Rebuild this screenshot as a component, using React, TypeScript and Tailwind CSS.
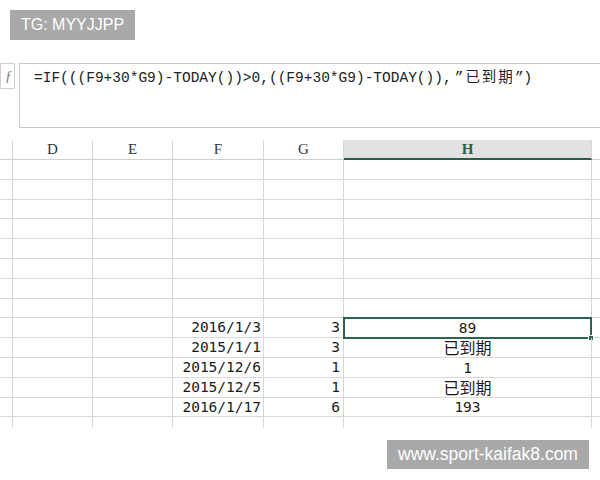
import { clsx } from 'clsx'

type Row = { f?: string; g?: string; h?: string }

// 13 visible rows under the header; the grid is slightly under 20px per row
const heights = [20, 20, 19, 20, 20, 20, 20, 19, 20, 20, 20, 20, 19]

const rows: Row[] = [
  {}, {}, {}, {}, {}, {}, {}, {},
  { f: '2016/1/3', g: '3', h: '89' },
  { f: '2015/1/1', g: '3', h: '已到期' },
  { f: '2015/12/6', g: '1', h: '1' },
  { f: '2015/12/5', g: '1', h: '已到期' },
  { f: '2016/1/17', g: '6', h: '193' },
]

const activeRow = 8

const cellFont = "font-['DejaVu_Sans_Mono','Noto_Sans_CJK_SC',monospace] text-[14.5px] text-[#1a1a1a]"

export default function App() {
  return (
    <div className="relative h-[480px] w-[600px] overflow-hidden bg-white">
      {/* Top tag */}
      <div className="ml-[10px] mt-[10px] flex h-[30px] w-[125px] items-center justify-center bg-[#a9a9a9] font-['Liberation_Sans',sans-serif] text-[16px] text-white">
        TG: MYYJJPP
      </div>

      {/* Formula bar */}
      <div className="mt-[23px] flex h-[65px] gap-[4px]">
        <div className="flex h-[26px] w-[15px] items-center justify-end overflow-hidden border border-[#cfcfcf] pr-[2px] font-['Liberation_Serif',serif] text-[14px] italic text-[#777]">
          ƒ
        </div>
        <div className="flex-1 border-y border-l border-[#c9c9c9] pl-[14px] pt-[4px] font-['Liberation_Mono','Noto_Sans_CJK_SC',monospace] text-[14.5px] text-[#222] whitespace-nowrap">
          =IF(((F9+30*G9)-TODAY())&gt;0,((F9+30*G9)-TODAY()),
          <span className="ml-[3px] mr-[2px]">”</span>
          <span className="tracking-[2px]">已到期</span>”)
        </div>
      </div>

      {/* Sheet */}
      <div className="mt-[12px]">
        <div className="flex h-[20px] border-b border-[#cfcfcf] font-['Liberation_Serif',serif] text-[15px] text-[#333]">
          <div className="w-[13px] border-r border-[#d6d6d6]" />
          <div className="flex w-[80px] items-center justify-center border-r border-[#d6d6d6]">D</div>
          <div className="flex w-[80px] items-center justify-center border-r border-[#d6d6d6]">E</div>
          <div className="flex w-[91px] items-center justify-center border-r border-[#d6d6d6]">F</div>
          <div className="flex w-[80px] items-center justify-center border-r border-[#d6d6d6]">G</div>
          <div className="-mb-[1px] flex w-[248px] items-center justify-center border-b-2 border-r border-b-[#2c5e47] border-r-[#d6d6d6] bg-[#e2e2e2] font-bold text-[#2c5e47]">
            H
          </div>
          <div className="flex-1" />
        </div>

        {rows.map((r, i) => (
          <div
            key={i}
            className={clsx('flex border-b border-[#d9d9d9]', heights[i] === 20 ? 'h-5' : 'h-[19px]', cellFont)}
          >
            <div className="w-[13px] border-r border-[#d6d6d6]" />
            <div className="w-[80px] border-r border-[#d6d6d6]" />
            <div className="w-[80px] border-r border-[#d6d6d6]" />
            <div className="flex w-[91px] items-center justify-end border-r border-[#d6d6d6] pr-[2px] pt-[1px]">{r.f}</div>
            <div className="flex w-[80px] items-center justify-end border-r border-[#d6d6d6] pr-[3px] pt-[1px]">{r.g}</div>
            <div className="relative flex w-[248px] items-center justify-center border-r border-[#d6d6d6]">
              <span
                className={clsx(
                  'leading-none',
                  r.h === '已到期' ? "-mt-[1px] font-['Noto_Sans_CJK_SC',sans-serif] text-[16px]" : 'mt-[1px]'
                )}
              >
                {r.h}
              </span>
              {i === activeRow && (
                <div className="absolute -bottom-[2px] -left-[1px] -right-[1px] -top-[1px] border-2 border-[#2e634b]">
                  <div className="absolute -bottom-[4px] -right-[4px] h-[6px] w-[6px] border border-white bg-[#2e634b]" />
                </div>
              )}
            </div>
            <div className="flex-1" />
          </div>
        ))}

        {/* Partial row below the last line */}
        <div className="flex h-[11px]">
          <div className="w-[13px] border-r border-[#d6d6d6]" />
          <div className="w-[80px] border-r border-[#d6d6d6]" />
          <div className="w-[80px] border-r border-[#d6d6d6]" />
          <div className="w-[91px] border-r border-[#d6d6d6]" />
          <div className="w-[80px] border-r border-[#d6d6d6]" />
          <div className="w-[248px] border-r border-[#d6d6d6]" />
        </div>
      </div>

      {/* Site tag */}
      <div className="absolute left-[387px] top-[440px] flex h-[29px] w-[202px] items-center justify-center bg-[#a9a9a9] font-['Liberation_Sans',sans-serif] text-[17.5px] text-white">
        www.sport-kaifak8.com
      </div>
    </div>
  )
}
